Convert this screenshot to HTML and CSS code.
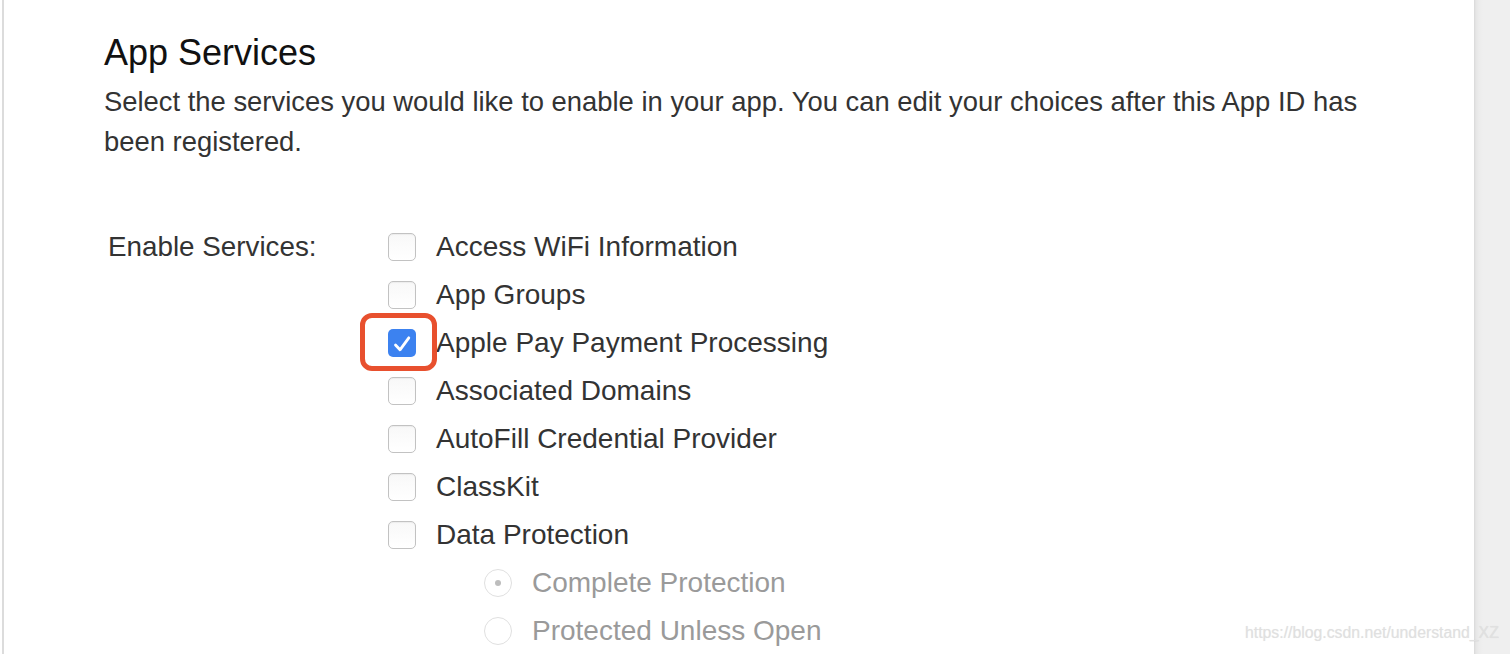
FILE: index.html
```html
<!DOCTYPE html>
<html>
<head>
<meta charset="utf-8">
<link rel="stylesheet" href="styles.css">
</head>
<body>
<div class="page">
  <div class="edge-left"></div>
  <main class="panel">
    <h1 class="title">App Services</h1>
    <p class="desc">Select the services you would like to enable in your app. You can edit your choices after this App ID has been registered.</p>
    <div class="services">
      <div class="label">Enable Services:</div>
      <ul class="list">
        <li class="item"><span class="cb"></span><span>Access WiFi Information</span></li>
        <li class="item"><span class="cb"></span><span>App Groups</span></li>
        <li class="item"><span class="cb checked"><svg viewBox="0 0 28 28" width="28" height="28"><path d="M7.5 16 L12 20.8 L20.8 8.8" fill="none" stroke="#fff" stroke-width="2.8" stroke-linecap="round" stroke-linejoin="round"/></svg></span><span>Apple Pay Payment Processing</span></li>
        <li class="item"><span class="cb"></span><span>Associated Domains</span></li>
        <li class="item"><span class="cb"></span><span>AutoFill Credential Provider</span></li>
        <li class="item"><span class="cb"></span><span>ClassKit</span></li>
        <li class="item"><span class="cb"></span><span>Data Protection</span></li>
        <li class="item sub"><span class="radio selected"></span><span>Complete Protection</span></li>
        <li class="item sub"><span class="radio"></span><span>Protected Unless Open</span></li>
      </ul>
    </div>
  </main>
  <div class="edge-right"></div>
</div>
<div class="watermark">https://blog.csdn.net/understand_XZ</div>
</body>
</html>
```
FILE: styles.css
```css
html, body {
  margin: 0;
  padding: 0;
  background: #fff;
  overflow: hidden;
}
body {
  font-family: "Liberation Sans", Arial, Helvetica, sans-serif;
  color: #333;
  width: 1510px;
  height: 654px;
  position: relative;
}
.page {
  display: flex;
  height: 654px;
}
.edge-left {
  width: 2px;
  margin-left: 2px;
  background: #dcdcdc;
  flex: none;
}
.panel {
  flex: 1;
  padding-left: 100px;
  background: #fff;
}
.edge-right {
  width: 36px;
  flex: none;
  background: linear-gradient(to right, #d9d9d9 0, #e6e6e6 2px, #ececec 5px, #efefef 9px, #efefef 100%);
}
.title {
  margin: 31px 0 0 0;
  font-size: 36px;
  line-height: 44px;
  font-weight: normal;
  color: #111;
}
.desc {
  margin: 7px 0 0 0;
  font-size: 27.4px;
  line-height: 40px;
  width: 1300px;
  color: #333;
}
.services {
  display: flex;
  margin-top: 61px;
}
.label {
  width: 280px;
  padding-left: 4px;
  font-size: 27.8px;
  line-height: 48px;
  flex: none;
}
.list {
  list-style: none;
  margin: 0;
  padding: 0;
}
.item {
  display: flex;
  align-items: center;
  height: 48px;
  font-size: 28px;
  color: #333;
}
.cb {
  box-sizing: border-box;
  width: 28px;
  height: 28px;
  border: 1px solid #c2c2c2;
  border-radius: 5px;
  background: linear-gradient(#f8f8f8, #fff);
  box-shadow: inset 0 1px 1px rgba(0,0,0,0.05);
  margin-right: 20px;
  flex: none;
  position: relative;
}
.cb.checked {
  border: none;
  background: #3c82f0;
  box-shadow: none;
}
.cb.checked svg {
  display: block;
}
.cb.checked::before {
  content: "";
  position: absolute;
  box-sizing: border-box;
  left: -28px;
  top: -16px;
  width: 77px;
  height: 58px;
  border: 5px solid #e8502e;
  border-radius: 12px;
  z-index: 2;
}
.sub {
  padding-left: 96px;
  color: #9a9a9a;
}
.radio {
  box-sizing: border-box;
  width: 28px;
  height: 28px;
  border: 1px solid #e0e0e0;
  border-radius: 50%;
  background: #fff;
  margin-right: 20px;
  flex: none;
  position: relative;
}
.radio.selected::after {
  content: "";
  position: absolute;
  left: 10px;
  top: 10px;
  width: 6px;
  height: 6px;
  border-radius: 50%;
  background: #bdbdbd;
}
.watermark {
  position: absolute;
  left: 1245px;
  top: 624px;
  font-size: 15.8px;
  color: #e0e0e0;
  text-shadow: 0 0 1px rgba(0,0,0,0.08);
  white-space: nowrap;
}
```
